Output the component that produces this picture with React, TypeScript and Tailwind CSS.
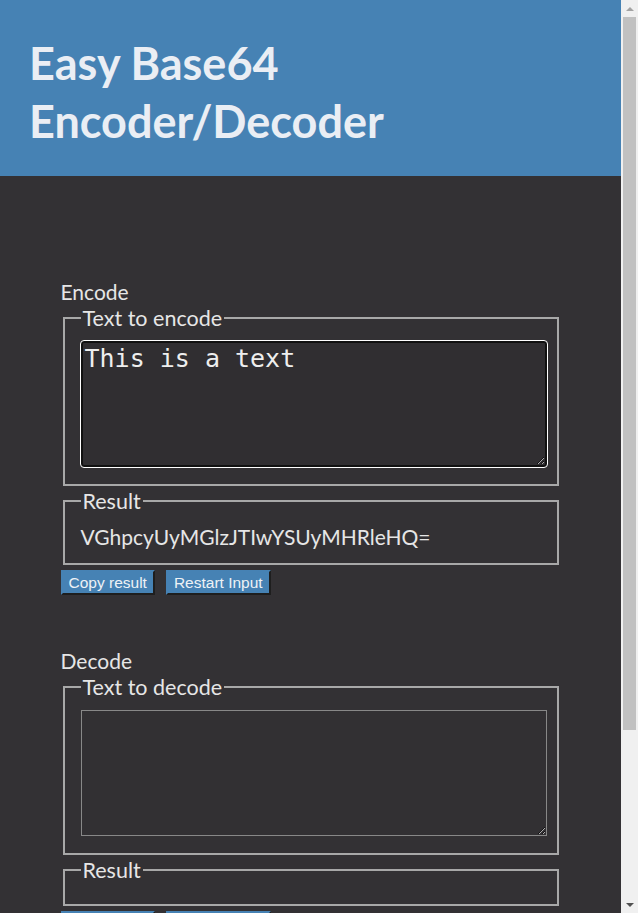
import React from "react";

const ui = { fontFamily: '"Lato", "Open Sans", sans-serif' };
const mono = { fontFamily: '"DejaVu Sans Mono", "Liberation Mono", monospace' };
const btn = { fontFamily: '"Liberation Sans", Arial, sans-serif' };

const btnCls =
  "bg-[#4682b4] text-[#eef2f6] text-[15.5px] leading-[19px] px-[6px] py-[1px] border-2 border-t-[#4682b4] border-l-[#4682b4] border-r-[#1e1e1e] border-b-[#1e1e1e]";

function Buttons() {
  return (
    <div className="flex gap-[11px] mt-[5px]">
      <button style={btn} className={btnCls}>
        Copy result
      </button>
      <button style={btn} className={btnCls}>
        Restart Input
      </button>
    </div>
  );
}

function Section({
  title,
  legend,
  value,
  result,
  focused,
}: {
  title: string;
  legend: string;
  value: string;
  result: string;
  focused: boolean;
}) {
  return (
    <section className="flex flex-col">
      <h2 className="text-[21px] leading-[26px] text-[#e6e6e6]">{title}</h2>
      <fieldset className="mx-[2px] border-2 border-[#a8a8a8] pl-4 pr-[10px] pb-[17px] pt-[10px]">
        <legend className="text-[21.5px] leading-[26px] text-[#e6e6e6] px-[2px]">{legend}</legend>
        <textarea
          readOnly
          value={value}
          style={mono}
          className={
            focused
              ? "block w-[466px] h-[126px] bg-[#302e31] text-[#eeeeee] text-[25px] leading-[30px] px-[2px] py-[1px] border-2 border-[#111] rounded-[3px] outline outline-1 outline-white resize-y"
              : "block w-[466px] h-[126px] bg-[#323033] text-[#eeeeee] text-[25px] leading-[30px] px-[2px] py-[1px] border border-[#888] resize-y"
          }
        />
      </fieldset>
      <fieldset
        className={
          result
            ? "mx-[2px] mt-[2px] border-2 border-[#a8a8a8] pl-4 pr-[10px] pb-[13px] pt-[10px]"
            : "mx-[2px] mt-[2px] border-2 border-[#a8a8a8] pl-4 pr-[10px] pb-[11px] pt-[10px]"
        }
      >
        <legend className="text-[21.5px] leading-[26px] text-[#e6e6e6] px-[2px]">Result</legend>
        <div className="text-[21px] leading-[26px] text-[#e6e6e6]">{result}</div>
      </fieldset>
      <Buttons />
    </section>
  );
}

function Scrollbar() {
  return (
    <div className="fixed right-0 top-0 w-[17px] h-[913px] bg-[#f0f0f0]">
      <div className="h-[17px] flex items-center justify-center">
        <div className="w-0 h-0 border-l-[4px] border-r-[4px] border-b-[4px] border-l-transparent border-r-transparent border-b-[#a3a3a3]" />
      </div>
      <div className="mx-[2px] h-[713px] bg-[#c1c1c1]" />
      <div className="absolute bottom-0 left-0 w-[17px] h-[17px] flex items-center justify-center">
        <div className="w-0 h-0 border-l-[4px] border-r-[4px] border-t-[4px] border-l-transparent border-r-transparent border-t-[#505050]" />
      </div>
    </div>
  );
}

export default function App() {
  return (
    <div style={ui} className="min-h-screen bg-[#333134]">
      <div className="w-[621px]">
        <header className="bg-[#4682b4] h-[176px] pl-[29px] pt-[34px]">
          <h1 className="text-[45px] leading-[58px] font-bold text-[#eaeef4] w-[420px]">
            Easy Base64 Encoder/Decoder
          </h1>
        </header>
        <main className="w-[500px] mx-auto pt-[103px] pb-[80px] flex flex-col gap-[53px]">
          <Section
            title="Encode"
            legend="Text to encode"
            value="This is a text"
            result="VGhpcyUyMGlzJTIwYSUyMHRleHQ="
            focused
          />
          <Section title="Decode" legend="Text to decode" value="" result="" focused={false} />
        </main>
      </div>
      <Scrollbar />
    </div>
  );
}
